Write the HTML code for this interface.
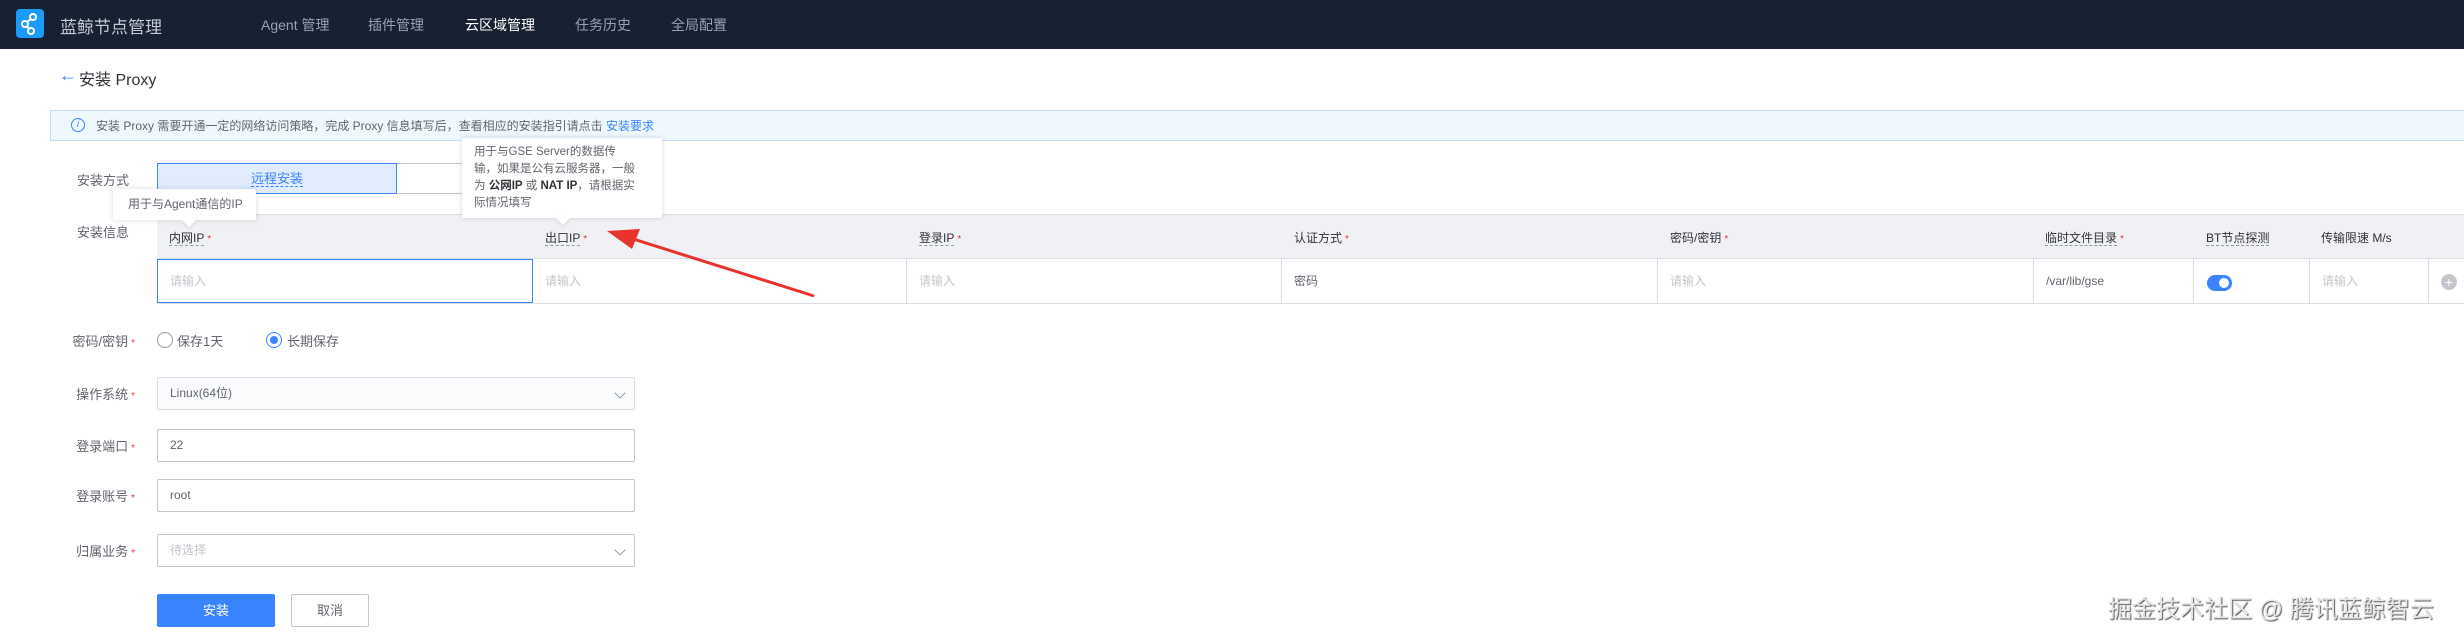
<!DOCTYPE html>
<html><head><meta charset="utf-8"><style>
*{margin:0;padding:0;box-sizing:border-box}
body{width:2464px;height:636px;overflow:hidden;background:#fff;font-family:"Liberation Sans","Noto Sans CJK SC",sans-serif;color:#63656e;position:relative;font-size:13px}
.a{position:absolute;white-space:nowrap}
.nav{position:absolute;left:0;top:0;width:2464px;height:49px;background:#182132}
.nav .i{position:absolute;top:15px;font-size:14px;color:#96a2b9}
.lbl{position:absolute;font-size:13px;color:#63656e;text-align:right;width:80px;left:55px}
.st{color:#ea3636;font-size:10px;margin-left:3px}
.inp{position:absolute;left:157px;width:478px;height:33px;border:1px solid #c4c6cc;border-radius:2px;font-size:12px;padding-left:12px;line-height:31px;color:#63656e}
.th{position:absolute;top:229px;font-size:12px;color:#313238}
.th u{text-decoration:none;border-bottom:1px dashed #979ba5}
.td{position:absolute;top:259px;height:44px;border-right:1px solid #dcdee5;font-size:12px;line-height:44px;padding-left:12px;color:#c4c6cc}
.tip{position:absolute;background:#fff;box-shadow:0 0 6px rgba(0,0,0,.15);border-radius:2px;font-size:12px;color:#63656e}
.tip:after{content:"";position:absolute;bottom:-5px;width:10px;height:10px;background:#fff;transform:rotate(45deg);box-shadow:2px 2px 3px rgba(0,0,0,.08)}
.t1:after{left:71px}.t2:after{left:96px}
.chev{position:absolute;right:10px;top:11px;width:8px;height:8px;border-right:1.5px solid #979ba5;border-bottom:1.5px solid #979ba5;transform:rotate(45deg)}
</style></head><body>
<div class="nav">
 <div class="a" style="left:16px;top:9px;width:28px;height:29px;background:#1b9cfc;border-radius:4px">
  <svg width="28" height="29" viewBox="0 0 28 29"><g stroke="#fff" stroke-width="2" fill="none"><circle cx="17" cy="8" r="3"/><circle cx="9" cy="15" r="3"/><circle cx="15" cy="22" r="3"/><path d="M15 10 11 13M11 17 13 20"/></g></svg>
 </div>
 <div class="a" style="left:60px;top:13px;font-size:17px;color:#c4c9d6">蓝鲸节点管理</div>
 <div class="i a" style="left:261px">Agent 管理</div>
 <div class="i a" style="left:368px">插件管理</div>
 <div class="i a" style="left:465px;color:#fff">云区域管理</div>
 <div class="i a" style="left:575px">任务历史</div>
 <div class="i a" style="left:671px">全局配置</div>
</div>
<div class="a" style="left:59px;top:65px;font-size:18px;color:#3a84ff">←</div>
<div class="a" style="left:79px;top:66px;font-size:16px;color:#313238">安装 Proxy</div>

<div class="a" style="left:50px;top:110px;width:2414px;height:31px;background:#f0f8ff;border:1px solid #c5daff;border-right:none"></div>
<div class="a" style="left:71px;top:118px;width:14px;height:14px;border:1px solid #3a84ff;border-radius:50%;font-size:10px;color:#3a84ff;text-align:center;line-height:12px;font-style:italic">i</div>
<div class="a" style="left:96px;top:117px;font-size:12px;color:#63656e">安装 Proxy 需要开通一定的网络访问策略，完成 Proxy 信息填写后，查看相应的安装指引请点击 <span style="color:#3a84ff">安装要求</span></div>

<div class="lbl" style="top:170px;left:49px;text-align:right">安装方式</div>
<div class="a" style="left:397px;top:163px;width:240px;height:31px;border:1px solid #c4c6cc;border-left:none"></div>
<div class="a" style="left:157px;top:163px;width:240px;height:31px;background:#e1ecff;border:1px solid #3a84ff;text-align:center;line-height:29px;color:#3a84ff"><span style="border-bottom:1px dashed #3a84ff">远程安装</span></div>

<div class="lbl" style="top:222px;left:49px">安装信息</div>
<div class="a" style="left:157px;top:214px;width:2307px;height:45px;background:#f0f1f5;border-top:1px solid #dcdee5;border-bottom:1px solid #dcdee5"></div>
<div class="th" style="left:169px"><u>内网IP</u><span class="st">*</span></div>
<div class="th" style="left:545px"><u>出口IP</u><span class="st">*</span></div>
<div class="th" style="left:919px"><u>登录IP</u><span class="st">*</span></div>
<div class="th" style="left:1294px">认证方式<span class="st">*</span></div>
<div class="th" style="left:1670px">密码/密钥<span class="st">*</span></div>
<div class="th" style="left:2045px"><u>临时文件目录</u><span class="st">*</span></div>
<div class="th" style="left:2206px"><u>BT节点探测</u></div>
<div class="th" style="left:2321px">传输限速 M/s</div>

<div class="a" style="left:157px;top:303px;width:2307px;height:1px;background:#dcdee5"></div>
<div class="td" style="left:533px;width:374px">请输入</div>
<div class="td" style="left:907px;width:375px">请输入</div>
<div class="td" style="left:1282px;width:376px;color:#63656e">密码</div>
<div class="td" style="left:1658px;width:376px">请输入</div>
<div class="td" style="left:2034px;width:160px;color:#63656e">/var/lib/gse</div>
<div class="td" style="left:2194px;width:116px"></div>
<div class="td" style="left:2310px;width:119px">请输入</div>
<div class="td" style="left:157px;width:376px;border:1px solid #3a84ff;line-height:42px">请输入</div>
<div class="a" style="left:2207px;top:275px;width:25px;height:16px;border-radius:8px;background:#3a84ff"><div style="position:absolute;right:3px;top:3px;width:10px;height:10px;border-radius:50%;background:#fff"></div></div>
<div class="a" style="left:2441px;top:274px;width:16px;height:16px;border-radius:50%;background:#c4c6cc;color:#fff;font-size:14px;line-height:16px;text-align:center">+</div>

<div class="tip t1" style="left:113px;top:189px;width:143px;height:31px;line-height:31px;padding-left:15px"><span>用于与Agent通信的IP</span></div>
<div class="tip t2" style="left:462px;top:138px;width:200px;height:80px;padding:6px 12px;line-height:17px;font-size:11.5px;white-space:nowrap">用于与GSE Server的数据传<br>输，如果是公有云服务器，一般<br>为 <b style="color:#313238">公网IP</b> 或 <b style="color:#313238">NAT IP</b>，请根据实<br>际情况填写</div>

<svg class="a" style="left:0;top:0" width="2464" height="636"><path d="M814 296 L630 238" stroke="#e8322c" stroke-width="3"/><path d="M607 231 L640 229 L632 249 Z" fill="#e8322c"/></svg>

<div class="lbl" style="top:331px">密码/密钥<span class="st">*</span></div>
<div class="a" style="left:157px;top:332px;width:16px;height:16px;border:1px solid #979ba5;border-radius:50%"></div>
<div class="a" style="left:177px;top:331px;font-size:13px">保存1天</div>
<div class="a" style="left:266px;top:332px;width:16px;height:16px;border:1px solid #3a84ff;border-radius:50%"><div style="margin:3px;width:8px;height:8px;border-radius:50%;background:#3a84ff"></div></div>
<div class="a" style="left:287px;top:331px;font-size:13px">长期保存</div>

<div class="lbl" style="top:384px">操作系统<span class="st">*</span></div>
<div class="inp" style="top:377px;background:#fafbfd;border-color:#dcdee5">Linux(64位)<i class="chev"></i></div>
<div class="lbl" style="top:436px">登录端口<span class="st">*</span></div>
<div class="inp" style="top:429px">22</div>
<div class="lbl" style="top:486px">登录账号<span class="st">*</span></div>
<div class="inp" style="top:479px">root</div>
<div class="lbl" style="top:541px">归属业务<span class="st">*</span></div>
<div class="inp" style="top:534px;color:#c4c6cc">待选择<i class="chev"></i></div>

<div class="a" style="left:157px;top:594px;width:118px;height:33px;background:#3a84ff;border-radius:2px;color:#fff;text-align:center;line-height:33px;font-size:13px">安装</div>
<div class="a" style="left:291px;top:594px;width:78px;height:33px;border:1px solid #c4c6cc;border-radius:2px;text-align:center;line-height:31px;font-size:13px">取消</div>

<div class="a" style="left:2108px;top:589px;font-size:24px;color:#e6e6e6;text-shadow:1px 1px 1px #555">掘金技术社区 @ 腾讯蓝鲸智云</div>
</body></html>
